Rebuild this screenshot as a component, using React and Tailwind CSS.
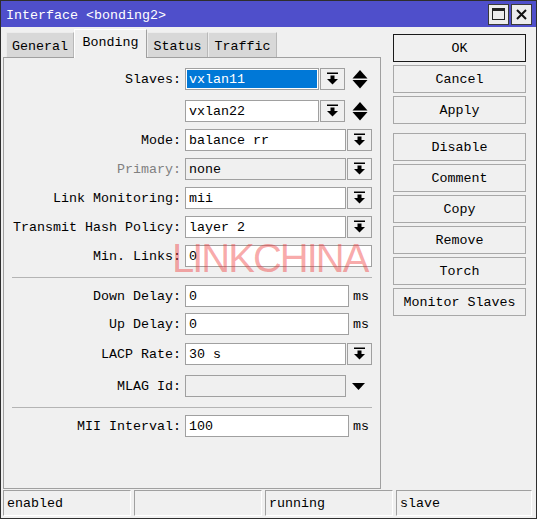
import React from 'react';

const font = "font-['Liberation_Mono',monospace] text-[13.33px] leading-none";

const DropIcon = () => (
  <svg width="23" height="20" viewBox="0 0 23 20">
    <rect x="6" y="3.5" width="11" height="1.5" fill="#000" />
    <rect x="9.5" y="6.5" width="4" height="4" fill="#000" />
    <polygon points="6,10 17,10 11.5,15.5" fill="#000" />
  </svg>
);

const DropButton = () => (
  <div className="w-[25px] h-[22px] border border-[#a0a0a0] bg-[#f0f0f0] flex items-center justify-center">
    <DropIcon />
  </div>
);

const UpDown = () => (
  <svg width="16" height="19" viewBox="0 0 16 19" className="ml-[7px]">
    <polygon points="0.5,8.5 15.5,8.5 8,0" fill="#000" />
    <polygon points="0.5,10 15.5,10 8,18.5" fill="#000" />
  </svg>
);

const Input = ({ value, w, disabled, selected }) => (
  <div
    className={`${w} h-[22px] border border-[#a0a0a0] flex items-center px-[1px] ${
      disabled ? 'bg-[#f0f0f0]' : 'bg-white'
    }`}
  >
    <span
      className={`h-[18px] flex items-center pl-[2px] pt-[1px] ${
        selected ? 'bg-[#0078d7] text-white w-full' : ''
      }`}
    >
      {value}
    </span>
  </div>
);

const Row = ({ label, mt, dim, children }) => (
  <div className={`flex items-center h-[22px] ${mt}`}>
    <div className={`w-[177px] text-right pt-[1px] ${dim ? 'text-[#808080]' : 'text-black'}`}>{label}</div>
    <div className="ml-[4px] flex items-center">{children}</div>
  </div>
);

const Sep = ({ mt }) => <div className={`ml-[8px] w-[360px] h-[1px] bg-[#b4b4b4] ${mt}`} />;

const Tab = ({ label, active, w }) =>
  active ? (
    <div className={`${w} h-[29px] bg-[#f0f0f0] border-l border-t border-r border-l-white border-t-white border-r-[#a0a0a0] flex items-center justify-center pb-[2px] z-10 -mb-[1px] relative`}>
      {label}
    </div>
  ) : (
    <div className={`${w} h-[25px] bg-[#d8d8d8] border-l border-t border-r border-l-[#ececec] border-t-[#ececec] border-r-[#b8b8b8] flex items-center justify-center pt-[3px]`}>
      {label}
    </div>
  );

const Btn = ({ label, mt, primary }) => (
  <div
    className={`h-[28px] ${mt} flex items-center justify-center pt-[1px] bg-[#f0f0f0] border ${
      primary ? 'border-[#1a1a1a]' : 'border-[#a8a8a8]'
    }`}
  >
    {label}
  </div>
);

const Cell = ({ label, w }) => (
  <div className={`${w} h-[26px] border-l border-t border-[#a0a0a0] border-r border-b border-r-white border-b-white flex items-center pl-[3px] pt-[1px]`}>
    {label}
  </div>
);

export default function App() {
  return (
    <div className={`relative w-[537px] h-[519px] bg-[#f0f0f0] border border-[#2e2e2e] flex flex-col ${font}`}>
      {/* title bar */}
      <div className="h-[26px] bg-[#4f4fcb] flex items-center pl-[5px] pr-[4px] text-white">
        <span className="flex-1 pt-[3px]">Interface &lt;bonding2&gt;</span>
        <div className="w-[21px] h-[21px] bg-[#ececec] border border-[#3a3a3a] flex items-center justify-center">
          <div className="w-[13px] h-[12px] border border-[#222] border-t-[3px]" />
        </div>
        <div className="ml-[2px] w-[21px] h-[21px] bg-[#ececec] border border-[#3a3a3a] flex items-center justify-center">
          <svg width="11" height="11" viewBox="0 0 11 11">
            <path d="M1 1 L10 10 M10 1 L1 10" stroke="#111" strokeWidth="2" />
          </svg>
        </div>
      </div>

      {/* body */}
      <div className="flex h-[462px]">
        <div className="ml-[2px] w-[378px] flex flex-col">
          <div className="h-[30px] flex items-end pl-[3px]">
            <Tab label="General" w="w-[68px]" />
            <Tab label="Bonding" w="w-[73px]" active />
            <Tab label="Status" w="w-[61px]" />
            <Tab label="Traffic" w="w-[69px]" />
          </div>
          <div className="flex-1 border border-[#a0a0a0] pt-[10px]">
            <Row label="Slaves:">
              <Input value="vxlan11" w="w-[134px]" selected />
              <div className="ml-[1px]">
                <DropButton />
              </div>
              <UpDown />
            </Row>
            <Row label="" mt="mt-[10px]">
              <Input value="vxlan22" w="w-[134px]" />
              <div className="ml-[1px]">
                <DropButton />
              </div>
              <UpDown />
            </Row>
            <Row label="Mode:" mt="mt-[7px]">
              <Input value="balance rr" w="w-[161px]" />
              <div className="ml-[1px]">
                <DropButton />
              </div>
            </Row>
            <Row label="Primary:" mt="mt-[7px]" dim>
              <Input value="none" w="w-[161px]" disabled />
              <div className="ml-[1px]">
                <DropButton />
              </div>
            </Row>
            <Row label="Link Monitoring:" mt="mt-[7px]">
              <Input value="mii" w="w-[161px]" />
              <div className="ml-[1px]">
                <DropButton />
              </div>
            </Row>
            <Row label="Transmit Hash Policy:" mt="mt-[7px]">
              <Input value="layer 2" w="w-[161px]" />
              <div className="ml-[1px]">
                <DropButton />
              </div>
            </Row>
            <Row label="Min. Links:" mt="mt-[7px]">
              <Input value="0" w="w-[187px]" />
            </Row>
            <Sep mt="mt-[10px]" />
            <Row label="Down Delay:" mt="mt-[7px]">
              <Input value="0" w="w-[164px]" />
              <span className="ml-[4px] pt-[2px]">ms</span>
            </Row>
            <Row label="Up Delay:" mt="mt-[6px]">
              <Input value="0" w="w-[164px]" />
              <span className="ml-[4px] pt-[2px]">ms</span>
            </Row>
            <Row label="LACP Rate:" mt="mt-[8px]">
              <Input value="30 s" w="w-[161px]" />
              <div className="ml-[1px]">
                <DropButton />
              </div>
            </Row>
            <Row label="MLAG Id:" mt="mt-[10px]">
              <Input value="" w="w-[161px]" disabled />
              <svg width="13" height="7" viewBox="0 0 13 7" className="ml-[6px]">
                <polygon points="0,0 13,0 6.5,7" fill="#000" />
              </svg>
            </Row>
            <Sep mt="mt-[10px]" />
            <Row label="MII Interval:" mt="mt-[7px]">
              <Input value="100" w="w-[164px]" />
              <span className="ml-[4px] pt-[2px]">ms</span>
            </Row>
          </div>
        </div>

        <div className="ml-[12px] w-[133px] pt-[7px] flex flex-col">
          <Btn label="OK" primary />
          <Btn label="Cancel" mt="mt-[3px]" />
          <Btn label="Apply" mt="mt-[3px]" />
          <Btn label="Disable" mt="mt-[9px]" />
          <Btn label="Comment" mt="mt-[3px]" />
          <Btn label="Copy" mt="mt-[3px]" />
          <Btn label="Remove" mt="mt-[3px]" />
          <Btn label="Torch" mt="mt-[3px]" />
          <Btn label="Monitor Slaves" mt="mt-[3px]" />
        </div>
      </div>

      {/* status bar */}
      <div className="flex gap-[3px] pl-[2px] pt-[1px]">
        <Cell label="enabled" w="w-[128px]" />
        <Cell label="" w="w-[128px]" />
        <Cell label="running" w="w-[128px]" />
        <Cell label="slave" w="w-[136px]" />
      </div>

      {/* watermark */}
      <div className="absolute left-[171px] top-[237px] font-['Liberation_Sans',sans-serif] text-[40px] leading-none tracking-[-2px] text-[rgba(238,50,50,0.42)] pointer-events-none">
        LINKCHINA
      </div>
    </div>
  );
}
